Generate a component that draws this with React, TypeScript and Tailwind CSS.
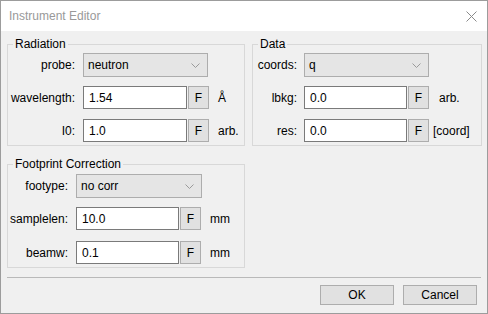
const font = { fontFamily: '"Segoe UI", "Liberation Sans", Arial, sans-serif' };

function Combo({ value, width }: { value: string; width: string }) {
  return (
    <div
      className={`${width} h-[24px] flex items-center justify-between bg-[#e5e5e5] border border-[#adadad] pl-[4px] pr-[7px]`}
    >
      <span>{value}</span>
      <svg width="9" height="5" viewBox="0 0 9 5" className="shrink-0">
        <path d="M0.5 0.5 L4.5 4.5 L8.5 0.5" fill="none" stroke="#9a9a9a" strokeWidth="1" />
      </svg>
    </div>
  );
}

function Field({ value, width, unit, unitGap }: { value: string; width: string; unit: string; unitGap: string }) {
  return (
    <div className="flex items-center">
      <div className={`${width} h-[23px] flex items-center bg-white border border-[#7a7a7a] pl-[5px]`}>
        {value}
      </div>
      <div className="ml-[1px] w-[21px] h-[23px] flex items-center justify-center bg-[#e1e1e1] border border-[#adadad] font-medium">
        F
      </div>
      <span className={unitGap}>{unit}</span>
    </div>
  );
}

function Label({ text, width }: { text: string; width: string }) {
  return <span className={`${width} shrink-0 text-right pr-[8px]`}>{text}</span>;
}

export default function App() {
  return (
    <div
      style={font}
      className="w-[488px] h-[314px] flex flex-col border border-[#9c9c9c] bg-[#f0f0f0] text-[12px] leading-[16px] text-black overflow-hidden"
    >
      {/* Title bar */}
      <div className="h-[30px] shrink-0 bg-white flex items-center justify-between pl-[8px] pr-[10px]">
        <span className="text-[#999999]">Instrument Editor</span>
        <svg width="11" height="11" viewBox="0 0 11 11">
          <path d="M0.5 0.5 L10.5 10.5 M10.5 0.5 L0.5 10.5" stroke="#8a8a8a" strokeWidth="1" />
        </svg>
      </div>

      <div className="flex-1 px-[6px] pt-[5px] flex flex-col">
        <div className="grid grid-cols-[238px_230px] gap-x-[7px] items-start">
          <div className="flex flex-col">
            {/* Radiation */}
            <fieldset className="border border-[#d8d8d8] pt-[1px] pb-[3px]">
              <legend className="ml-[5px] px-[2px]">Radiation</legend>
              <div className="flex items-center">
                <Label text="probe:" width="w-[75px]" />
                <Combo value="neutron" width="w-[125px]" />
              </div>
              <div className="flex items-center mt-[9px]">
                <Label text="wavelength:" width="w-[75px]" />
                <Field value="1.54" width="w-[104px]" unit="Å" unitGap="ml-[9px]" />
              </div>
              <div className="flex items-center mt-[10px]">
                <Label text="I0:" width="w-[75px]" />
                <Field value="1.0" width="w-[104px]" unit="arb." unitGap="ml-[9px]" />
              </div>
            </fieldset>

            {/* Footprint Correction */}
            <fieldset className="mt-[10px] border border-[#d8d8d8] pt-[2px] pb-[3px]">
              <legend className="ml-[5px] px-[2px]">Footprint Correction</legend>
              <div className="flex items-center">
                <Label text="footype:" width="w-[68px]" />
                <Combo value="no corr" width="w-[126px]" />
              </div>
              <div className="flex items-center mt-[9px]">
                <Label text="samplelen:" width="w-[68px]" />
                <Field value="10.0" width="w-[103px]" unit="mm" unitGap="ml-[9px]" />
              </div>
              <div className="flex items-center mt-[11px]">
                <Label text="beamw:" width="w-[68px]" />
                <Field value="0.1" width="w-[103px]" unit="mm" unitGap="ml-[9px]" />
              </div>
            </fieldset>
          </div>

          {/* Data */}
          <fieldset className="border border-[#d8d8d8] pt-[1px] pb-[3px]">
            <legend className="ml-[5px] px-[2px]">Data</legend>
            <div className="flex items-center">
              <span className="w-[51px] shrink-0 text-right pr-[7px]">coords:</span>
              <Combo value="q" width="w-[125px]" />
            </div>
            <div className="flex items-center mt-[9px]">
              <span className="w-[51px] shrink-0 text-right pr-[7px]">lbkg:</span>
              <Field value="0.0" width="w-[103px]" unit="arb." unitGap="ml-[10px]" />
            </div>
            <div className="flex items-center mt-[10px]">
              <span className="w-[51px] shrink-0 text-right pr-[7px]">res:</span>
              <Field value="0.0" width="w-[103px]" unit="[coord]" unitGap="ml-[4px]" />
            </div>
          </fieldset>
        </div>

        {/* Button box */}
        <div className="mt-[9px] h-px bg-[#b9b9b9]" />
        <div className="mt-[7px] flex justify-end gap-[9px] pr-[4px]">
          <button className="w-[74px] h-[20px] bg-[#e1e1e1] border border-[#adadad] flex items-center justify-center">
            OK
          </button>
          <button className="w-[74px] h-[20px] bg-[#e1e1e1] border border-[#adadad] flex items-center justify-center">
            Cancel
          </button>
        </div>
      </div>
    </div>
  );
}
